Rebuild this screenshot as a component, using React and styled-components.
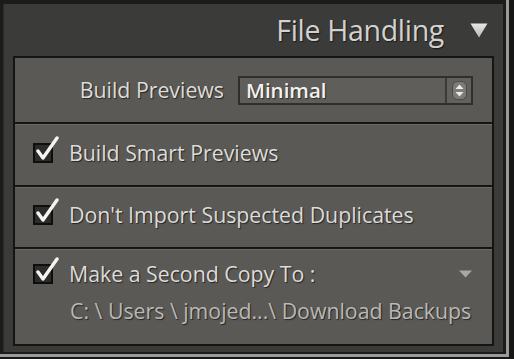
import React from "react";
import styled, { createGlobalStyle } from "styled-components";

const Global = createGlobalStyle`
  html, body { margin: 0; padding: 0; background: #141414; }
  body { font-family: "Open Sans", "DejaVu Sans", sans-serif; }
`;

const Frame = styled.div`
  width: 514px;
  height: 359px;
  background: #161616;
  overflow: hidden;
`;

const Window = styled.div`
  width: 500px;
  height: 348px;
  padding: 4px 3px 2px 3px;
  background: #1b1b1a;
  border-right: 3px solid #9a9a98;
  border-bottom: 3px solid #9a9a98;
  display: flex;
`;

const Sidebar = styled.div`
  flex: 1;
  background: #3b3b39;
  border-left: 1px solid #2c2c2b;
  padding: 0 9px 6px 9px;
  display: flex;
  flex-direction: column;
`;

const Header = styled.div`
  height: 52px;
  display: flex;
  align-items: center;
  justify-content: flex-end;
  gap: 26px;
  padding-right: 6px;
`;

const Title = styled.span`
  font-size: 28.5px;
  color: #d2d2d0;
  letter-spacing: -0.3px;
  text-shadow: 1px 1px 1px #1c1c1c;
  line-height: 1;
  padding-top: 1px;
`;

const Panel = styled.div`
  flex: 1;
  border: 2px solid #151514;
  background: #5a5955;
  display: flex;
  flex-direction: column;
`;

const Row = styled.div`
  height: ${(p) => p.$h}px;
  display: flex;
  align-items: ${(p) => (p.$top ? "flex-start" : "center")};
  justify-content: ${(p) => (p.$end ? "flex-end" : "flex-start")};
  padding: ${(p) => p.$pad};
  box-sizing: border-box;
  & + & {
    border-top: 2px solid #151514;
    box-shadow: inset 0 1px 0 #6b6a66;
  }
`;

const Label = styled.span`
  font-size: 21.3px;
  color: ${(p) => p.$color || "#dcdcda"};
  letter-spacing: ${(p) => p.$ls || "0"};
  text-shadow: 1px 1px 1px #262625;
  line-height: 1;
  white-space: nowrap;
`;

const Select = styled.div`
  width: 235px;
  height: 29px;
  box-sizing: border-box;
  margin-left: 14px;
  border: 2px solid #2f2f2d;
  background: #5f5e5b;
  display: flex;
  align-items: stretch;
`;

const SelectValue = styled.span`
  flex: 1;
  padding-left: 6px;
  display: flex;
  align-items: center;
  font-size: 20.5px;
  font-weight: 600;
  color: #f2f2f0;
  text-shadow: 1px 1px 1px #2a2a29;
`;

const Stepper = styled.div`
  width: 24px;
  border-left: 2px solid #3a3a38;
  background: #62615e;
  display: flex;
  align-items: center;
  justify-content: center;
`;

const Check = styled.div`
  position: relative;
  width: 20px;
  height: 20px;
  box-sizing: border-box;
  border: 2px solid #0e0e0e;
  background: #2c2c2b;
  flex-shrink: 0;
  margin-right: 16px;
  svg {
    position: absolute;
    left: 1px;
    top: -9px;
  }
`;

const Line = styled.div`
  display: flex;
  align-items: center;
  height: ${(p) => p.$h}px;
`;

const Stack = styled.div`
  display: flex;
  flex-direction: column;
  width: 100%;
`;

const Spacer = styled.div`
  flex: 1;
`;

const Path = styled.div`
  padding-left: 37px;
  margin-top: 13px;
`;

function CheckBox() {
  return (
    <Check>
      <svg width="24" height="26" viewBox="0 0 24 26">
        <path
          d="M2 15 L7 22 L21 2"
          fill="none"
          stroke="#f4f4f2"
          strokeWidth="3.4"
          strokeLinecap="round"
          strokeLinejoin="round"
        />
      </svg>
    </Check>
  );
}

export default function App() {
  return (
    <Frame>
      <Global />
      <Window>
        <Sidebar>
          <Header>
            <Title>File Handling</Title>
            <svg width="18" height="15" viewBox="0 0 18 15">
              <defs>
                <linearGradient id="tg" x1="0" y1="0" x2="0" y2="1">
                  <stop offset="0" stopColor="#e8e8e6" />
                  <stop offset="1" stopColor="#b8b8b6" />
                </linearGradient>
              </defs>
              <path d="M0.5 0.5 H17.5 L9 14.5 Z" fill="url(#tg)" />
            </svg>
          </Header>
          <Panel>
            <Row $h={64} $end $pad="0 19px 0 0">
              <Label>Build Previews</Label>
              <Select>
                <SelectValue>Minimal</SelectValue>
                <Stepper>
                  <svg width="15" height="19" viewBox="0 0 15 19">
                    <rect x="0.5" y="0.5" width="14" height="18" rx="5" fill="#7c7b78" stroke="#4a4a48" />
                    <path d="M3.5 8 L7.5 3.5 L11.5 8 Z" fill="#ececea" />
                    <path d="M3.5 11 L7.5 15.5 L11.5 11 Z" fill="#ececea" />
                  </svg>
                </Stepper>
              </Select>
            </Row>
            <Row $h={63} $pad="0 0 3px 18px">
              <CheckBox />
              <Label>Build Smart Previews</Label>
            </Row>
            <Row $h={62} $pad="0 0 5px 18px">
              <CheckBox />
              <Label>Don't Import Suspected Duplicates</Label>
            </Row>
            <Row $h={97} $top $pad="12px 20px 0 18px">
              <Stack>
                <Line $h={26}>
                  <CheckBox />
                  <Label>Make a Second Copy To :</Label>
                  <Spacer />
                  <svg width="13" height="8" viewBox="0 0 13 8">
                    <path d="M0 0.5 H13 L6.5 7.5 Z" fill="#a8a8a6" />
                  </svg>
                </Line>
                <Path>
                  <Label $color="#b9b9b7">C: \ Users \ jmojed...\ Download Backups</Label>
                </Path>
              </Stack>
            </Row>
          </Panel>
        </Sidebar>
      </Window>
    </Frame>
  );
}
